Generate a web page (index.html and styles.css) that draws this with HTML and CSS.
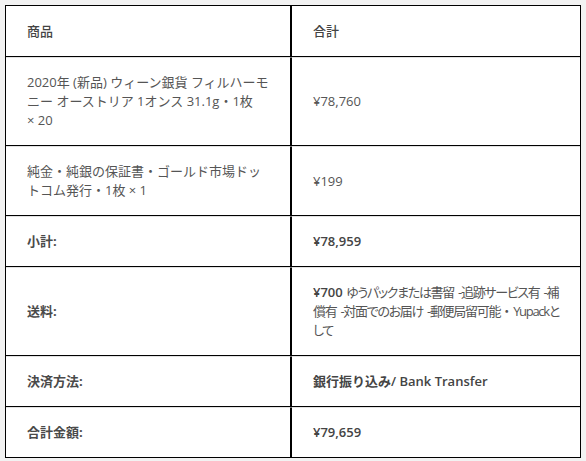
FILE: index.html
```html
<!DOCTYPE html>
<html lang="ja">
<head>
<meta charset="utf-8">
<link rel="stylesheet" href="styles.css">
</head>
<body>
<table class="order">
  <colgroup><col class="c-left"><col class="c-right"></colgroup>
  <thead>
    <tr><th>商品</th><th>合計</th></tr>
  </thead>
  <tbody>
    <tr><td>2020年 (新品) ウィーン銀貨 フィルハーモニー オーストリア 1オンス 31.1g・1枚 <span class="qty">×&nbsp;20</span></td><td>¥78,760</td></tr>
    <tr><td>純金・純銀の保証書・ゴールド市場ドットコム発行・1枚 <span class="qty">×&nbsp;1</span></td><td>¥199</td></tr>
  </tbody>
  <tfoot>
    <tr><th>小計:</th><td><b>¥78,959</b></td></tr>
    <tr><th>送料:</th><td><b>¥700</b> <span class="ship">ゆうパックまたは書留 -追跡サービス有 -補償有 -対面でのお届け -郵便局留可能</span>・<span class="ship">Yupackとして</span></td></tr>
    <tr><th>決済方法:</th><td><b>銀行振り込み/ Bank Transfer</b></td></tr>
    <tr><th>合計金額:</th><td><b>¥79,659</b></td></tr>
  </tfoot>
</table>
</body>
</html>
```
FILE: styles.css
```css
html, body {
  margin: 0;
  background: #f2f2f2;
}
body {
  padding: 5px;
  font-family: "Open Sans", "Noto Sans CJK JP", sans-serif;
  font-size: 13px;
  line-height: 19px;
  color: #555;
}
.order {
  width: 576px;
  table-layout: fixed;
  border-collapse: separate;
  border-spacing: 0;
  background: #fff;
  border: 1px solid #000;
}
.c-left { width: 285px; }
.c-right { width: 289px; }
.order th,
.order td {
  padding: 15px 21px;
  text-align: left;
  vertical-align: middle;
  border-top: 1px solid #e2e2e2;
  border-bottom: 1px solid #000;
}
.order tr > :first-child { border-right: 1px solid #000; }
.order tr > :last-child { border-left: 1px solid #000; }
.order thead th {
  border-top: 0;
  font-weight: 500;
  color: #444;
  padding-top: 16px;
  padding-bottom: 15px;
}
.order tfoot tr:last-child > * { border-bottom: 0; }
.order tfoot th { font-weight: 700; color: #4a4a4a; }
.order b { font-weight: 600; color: #444; }
.ship { font-feature-settings: "palt"; letter-spacing: -1.3px; word-spacing: 2px; }
.qty { white-space: nowrap; }
```
